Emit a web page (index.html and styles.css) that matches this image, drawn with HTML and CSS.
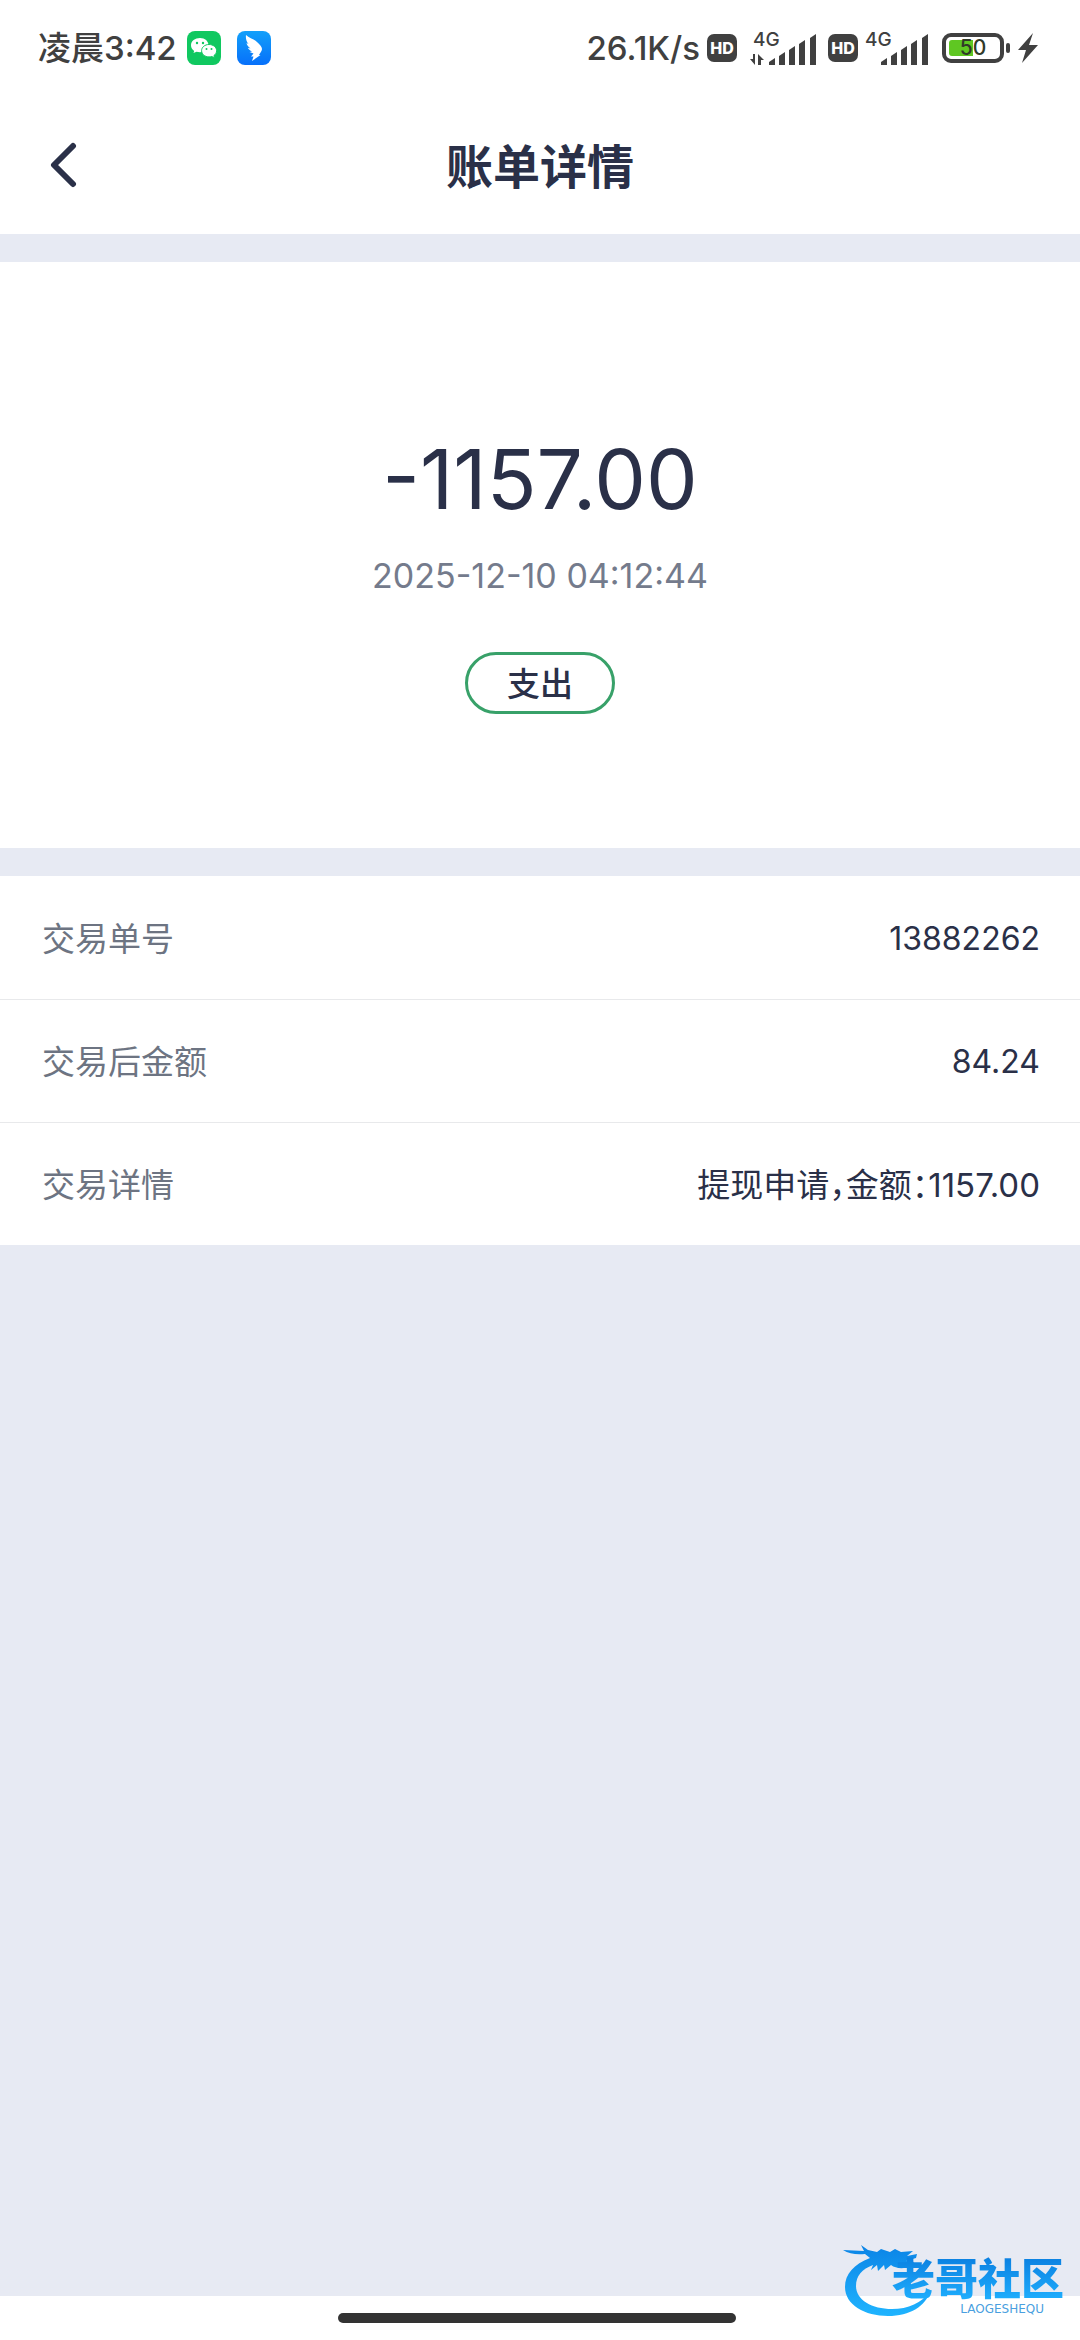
FILE: index.html
```
<!DOCTYPE html>
<html lang="zh-CN">
<head>
<meta charset="utf-8">
<meta name="viewport" content="width=device-width, initial-scale=1">
<title>账单详情</title>
<link rel="stylesheet" href="styles.css">
</head>
<body>
<div class="status">
  <div class="status-left">
    <span class="status-time">凌晨3:42</span>
    <svg class="app-icon" viewBox="0 0 34 34" aria-hidden="true">
      <rect width="34" height="34" rx="8" fill="#10c860"/>
      <path d="M13 7C8 7 4 10 4 14.300c0 2.400 1.200 4.300 3.200 5.600L6.500 22l3-1.300c1 .3 2.200.5 3.500.5 5 0 8.500-3 8.500-7S18 7 13 7z" fill="#fff"/>
      <path d="M22 13.500c-4.200 0-7.400 2.700-7.400 6.200s3.200 6.200 7.400 6.200c1 0 2-.1 2.800-.4l2.700 1.400-.6-2.300c1.700-1.200 2.700-2.900 2.700-4.900 0-3.500-3.400-6.200-7.600-6.200z" fill="#fff" stroke="#10c860"/>
      <g fill="#10c860"><circle cx="10" cy="12" r="1.200"/><circle cx="16" cy="12" r="1.200"/><circle cx="19.500" cy="18" r="1"/><circle cx="24.500" cy="18" r="1"/></g>
    </svg>
    <svg class="app-icon" viewBox="0 0 34 34" aria-hidden="true">
      <defs><linearGradient id="ding" x1="0" y1="0" x2="0" y2="1"><stop offset="0" stop-color="#12a0fa"/><stop offset="1" stop-color="#0770fa"/></linearGradient></defs>
      <rect width="34" height="34" rx="8" fill="url(#ding)"/>
      <path d="M9 4c3 3 8 4 11 7 2.500 2.500 5 4.500 5 7 0 2-2 4-3 6h1.500L15 30l1.500-4.500H14l2.500-3-4-1.500 2.500-.5c-2-1-3.500-2.200-4-3.800l2.500.8C11.500 16 9.800 14 9.500 12l2 1C9.500 10.500 8.500 7.500 9 4z" fill="#fff"/>
    </svg>
  </div>
  <div class="status-right">
    <span class="status-speed">26.1K/s</span>
    <span class="hd">HD</span>
    <svg class="signal signal-data" viewBox="0 0 66 48" role="img" aria-label="4G">
      <text x="3" y="22" class="net">4G</text>
      <path d="M3 30v5H0l5 6V30zm5 11V30l6 6h-3v5z"/>
      <path d="M19 38l6-4v7h-6zM29 32l6-4v13h-6zM39 26l6-4v19h-6zM49 20l6-4v25h-6zM60 14l6-4v31h-6z"/>
    </svg>
    <span class="hd">HD</span>
    <svg class="signal" viewBox="2 0 64 48" role="img" aria-label="4G">
      <text x="3" y="22" class="net">4G</text>
      <path d="M19 38l6-4v7h-6zM29 32l6-4v13h-6zM39 26l6-4v19h-6zM49 20l6-4v25h-6zM60 14l6-4v31h-6z"/>
    </svg>
    <span class="battery"><span class="level">50</span></span>
    <svg class="bolt" viewBox="0 0 20 30" aria-hidden="true"><path d="M15 0L0 17h8L4 30l16-18h-9z"/></svg>
  </div>
</div>
<header class="bar">
  <button class="back" type="button" aria-label="返回"><svg viewBox="0 0 28 46" aria-hidden="true"><path d="M24 4L5 23l19 19"/></svg></button>
  <h1 class="title">账单详情</h1>
</header>
<main class="main">
  <section class="summary">
    <p class="amount">-1157.00</p>
    <time class="date" datetime="2025-12-10T04:12:44">2025-12-10 04:12:44</time>
    <span class="tag">支出</span>
  </section>
  <dl class="details">
    <div class="row"><dt>交易单号</dt><dd class="number">13882262</dd></div>
    <div class="row"><dt>交易后金额</dt><dd class="number">84.24</dd></div>
    <div class="row"><dt>交易详情</dt><dd>提现申请，金额：1157.00</dd></div>
  </dl>
</main>
<footer class="nav"><span class="handle"></span></footer>
<div class="watermark">
  <svg class="dragon" viewBox="0 0 94 76" aria-hidden="true">
    <defs><linearGradient id="sea" x1="0" y1="0" x2="0" y2="1"><stop offset="0" stop-color="#0b84e6"/><stop offset="1" stop-color="#1fb4ff"/></linearGradient></defs>
    <path fill="url(#sea)" d="M28 14C12 20 3 30 3 43c0 18 20 29 43 29 22 0 38-10 42-25-8 12-22 18-38 18C30 65 14 56 14 42c0-10 6-17 17-21l-2 5 6-5 1 6 6-6 1 5 6-5c5 4 14 4 20 1l3-4-8-1 10-3 1-4-10 2 6-5-12 1-6-3-5 3-9-3-4 3-9-2-7-5 3 6-21-1c6 4 14 5 22 4z"/>
  </svg>
  <div class="brand"><span class="brand-name">老哥社区</span><span class="brand-latin">LAOGESHEQU</span></div>
</div>
</body>
</html>
```
FILE: styles.css
```
* { box-sizing: border-box; margin: 0; padding: 0; }

body {
  min-height: 100vh;
  display: flex;
  flex-direction: column;
  position: relative;
  background: #fff;
  color: #2a3048;
  font-family: Inter, "Noto Sans CJK SC", sans-serif;
  font-size: 33px;
  line-height: 48px;
}

.status {
  display: flex;
  justify-content: space-between;
  align-items: center;
  height: 96px;
  padding: 0 42px 0 38px;
  color: #404040;
  font-weight: 500;
}
.status-left, .status-right { display: flex; align-items: center; }
.status-time { margin-right: 10px; }
.app-icon { width: 34px; height: 34px; margin-right: 16px; }
.hd {
  width: 30px;
  height: 28px;
  margin-left: 7px;
  border-radius: 7px;
  background: #404040;
  color: #fff;
  font-size: 16px;
  font-weight: 800;
  line-height: 28px;
  text-align: center;
}
.signal { width: 64px; height: 48px; margin-left: 6px; fill: #404040; }
.signal-data { width: 66px; margin: 0 5px 0 13px; }
.net { font-size: 19px; font-weight: 500; }
.battery {
  position: relative;
  width: 62px;
  height: 30px;
  margin-left: 14px;
  padding: 3px;
  border: 4px solid #404040;
  border-radius: 9px;
}
.battery::after {
  content: "";
  position: absolute;
  right: -10px;
  top: 6px;
  width: 4px;
  height: 10px;
  border-radius: 2px;
  background: #404040;
}
.level {
  display: block;
  border-radius: 3px;
  background: linear-gradient(90deg, #5fc722 50%, transparent 50%);
  color: #303a28;
  font-size: 21px;
  line-height: 16px;
  text-align: center;
}
.bolt { width: 20px; height: 30px; margin-left: 14px; fill: #404040; }

.bar {
  display: grid;
  grid-template-columns: 128px 1fr 128px;
  align-items: center;
  height: 138px;
}
.back {
  height: 92px;
  padding-left: 49px;
  border: 0;
  background: none;
  text-align: left;
}
.back svg { display: block; width: 28px; height: 46px; fill: none; stroke: #2a3048; stroke-width: 6; stroke-linecap: round; stroke-linejoin: round; }
.title { padding-top: 4px; text-align: center; font-size: 47px; line-height: 64px; font-weight: 700; }

.main {
  flex: 1;
  display: flex;
  flex-direction: column;
  gap: 28px;
  padding-top: 28px;
  background: #e7eaf3;
}
.summary {
  display: flex;
  flex-direction: column;
  align-items: center;
  height: 586px;
  padding-top: 170px;
  background: #fff;
}
.amount { font-size: 82px; line-height: 96px; }
.date { margin-top: 24px; font-size: 34px; color: #747b8c; }
.tag {
  width: 150px;
  margin-top: 52px;
  padding-top: 2px;
  border: 3px solid #38a169;
  border-radius: 31px;
  line-height: 54px;
  text-align: center;
  font-weight: 500;
}
.details { background: #fff; }
.row {
  display: flex;
  justify-content: space-between;
  align-items: center;
  height: 123px;
  padding: 2px 40px 0 42px;
}
.row + .row { border-top: 1px solid #e8e9eb; }
.row dt { color: #6d7482; }
.row dd { font-feature-settings: "halt"; }
.row .number { font-size: 32px; }

.nav { display: flex; justify-content: center; height: 44px; padding: 17px 6px 0 0; }
.handle { width: 37%; height: 10px; border-radius: 5px; background: #333; }

.watermark {
  position: absolute;
  right: 16px;
  bottom: 20px;
  width: 222px;
  height: 76px;
}
.dragon { position: absolute; left: 0; top: 0; width: 94px; height: 76px; }
.brand {
  position: absolute;
  right: 0;
  top: 12px;
  display: flex;
  flex-direction: column;
  align-items: flex-end;
}
.brand-name {
  font-size: 43px;
  line-height: 46px;
  font-weight: 900;
  color: transparent;
  background: linear-gradient(#0b7fe0, #1fb0ff);
  background-clip: text;
}
.brand-latin { padding-right: 20px; font: 12px/14px "DejaVu Sans", sans-serif; color: #4a9fe0; }
```
